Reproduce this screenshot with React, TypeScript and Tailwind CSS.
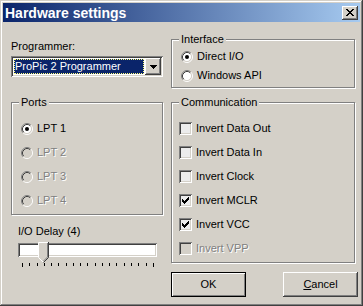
import React from "react";

const raised =
  "shadow-[inset_-1px_-1px_#404040,inset_1px_1px_#ffffff,inset_-2px_-2px_#808080,inset_2px_2px_#d4d0c8]";
const sunken =
  "shadow-[inset_1px_1px_#808080,inset_-1px_-1px_#ffffff,inset_2px_2px_#404040,inset_-2px_-2px_#d4d0c8]";
const disabledText = "text-[#808080] [text-shadow:1px_1px_0_#ffffff]";

function Radio({ checked, disabled, label }: { checked?: boolean; disabled?: boolean; label: string }) {
  return (
    <div className="flex items-center gap-[4px] h-[13px]">
      <svg width="12" height="12" viewBox="0 0 12 12" className="shrink-0">
        <circle cx="6" cy="6" r="4.5" fill={disabled ? "#d4d0c8" : "#ffffff"} />
        <path d="M2.11 9.89A5.5 5.5 0 0 1 9.89 2.11" stroke="#808080" fill="none" />
        <path d="M9.89 2.11A5.5 5.5 0 0 1 2.11 9.89" stroke="#ffffff" fill="none" />
        <path d="M2.82 9.18A4.5 4.5 0 0 1 9.18 2.82" stroke="#404040" fill="none" />
        <path d="M9.18 2.82A4.5 4.5 0 0 1 2.82 9.18" stroke="#d4d0c8" fill="none" />
        {checked && <circle cx="6" cy="6" r="2" fill="#000000" />}
      </svg>
      <span className={disabled ? disabledText : ""}>{label}</span>
    </div>
  );
}

function Check({ checked, disabled, label }: { checked?: boolean; disabled?: boolean; label: string }) {
  return (
    <div className="flex items-center gap-[4px] h-[13px]">
      <div
        className={`w-[13px] h-[13px] shrink-0 flex items-center justify-center ${sunken} ${
          disabled ? "bg-[#d4d0c8]" : "bg-[#ececec]"
        }`}
      >
        {checked && (
          <svg width="7" height="7" viewBox="0 0 7 7" shapeRendering="crispEdges">
            <path
              d="M0 2h1v3H0z M1 3h1v3H1z M2 4h1v3H2z M3 3h1v3H3z M4 2h1v3H4z M5 1h1v3H5z M6 0h1v3H6z"
              fill="#000000"
            />
          </svg>
        )}
      </div>
      <span className={disabled ? disabledText : ""}>{label}</span>
    </div>
  );
}

function Group({
  label,
  className,
  children,
}: {
  label: string;
  className: string;
  children: React.ReactNode;
}) {
  return (
    <div
      className={`relative border border-[#808080] shadow-[inset_1px_1px_#ffffff,1px_1px_#ffffff] ${className}`}
    >
      <span className="absolute left-[7px] top-[-7px] bg-[#d4d0c8] px-[2px] leading-[13px]">{label}</span>
      {children}
    </div>
  );
}

export default function App() {
  return (
    <div
      className={`w-[363px] h-[306px] bg-[#d4d0c8] p-[3px] flex flex-col font-['Liberation_Sans',Arial,sans-serif] text-[11px] leading-[13px] text-black shadow-[inset_-1px_-1px_#404040,inset_1px_1px_#d4d0c8,inset_-2px_-2px_#808080,inset_2px_2px_#ffffff]`}
    >
      {/* Title bar */}
      <div className="h-[19px] shrink-0 flex items-center justify-between pl-[2px] pr-[2px] bg-[linear-gradient(to_right,#0a246a,#a6caf0)]">
        <span className="text-white font-bold text-[14px] leading-[16px]">Hardware settings</span>
        <div className={`w-[16px] h-[14px] bg-[#d4d0c8] flex items-center justify-center ${raised}`}>
          <svg width="8" height="7" viewBox="0 0 8 7" shapeRendering="crispEdges" className="mt-[-1px]">
            <path
              d="M0 0h2v1H0z M6 0h2v1H6z M1 1h2v1H1z M5 1h2v1H5z M2 2h4v1H2z M3 3h2v1H3z M2 4h4v1H2z M1 5h2v1H1z M5 5h2v1H5z M0 6h2v1H0z M6 6h2v1H6z"
              fill="#000000"
            />
          </svg>
        </div>
      </div>

      {/* Body */}
      <div className="flex pl-[8px] gap-[8px]">
        {/* Left column */}
        <div className="w-[152px] flex flex-col">
          <div className="mt-[18px] h-[13px]">Programmer:</div>
          <div className={`mt-[3px] h-[21px] w-[152px] p-[2px] bg-white flex ${sunken}`}>
            <div className="flex-1 p-[1px]">
              <div className="h-full bg-[#0a246a] border border-dotted border-[#ffff80] text-white flex items-center">
                ProPic 2 Programmer
              </div>
            </div>
            <div className={`w-[16px] h-[17px] bg-[#d4d0c8] flex items-center justify-center ${raised}`}>
              <svg width="7" height="4" viewBox="0 0 7 4" shapeRendering="crispEdges">
                <path d="M0 0h7v1H0z M1 1h5v1H1z M2 2h3v1H2z M3 3h1v1H3z" fill="#000000" />
              </svg>
            </div>
          </div>

          <Group label="Ports" className="mt-[25px] w-[152px] h-[113px] flex flex-col pt-[19px] pl-[9px] gap-[11px]">
            <Radio checked label="LPT 1" />
            <Radio disabled label="LPT 2" />
            <Radio disabled label="LPT 3" />
            <Radio disabled label="LPT 4" />
          </Group>

          <div className="mt-[10px] ml-[7px] h-[13px]">I/O Delay (4)</div>
          <div className={`relative mt-[5px] ml-[7px] w-[139px] h-[14px] bg-white ${sunken}`}>
            <svg width="11" height="21" viewBox="0 0 11 21" className="absolute left-[20px] top-[-1px]">
              <polygon points="0,0 11,0 11,15.5 5.5,21 0,15.5" fill="#d4d0c8" />
              <path d="M0.5 15.5V0.5H10" stroke="#ffffff" fill="none" />
              <path d="M0.5 15.5L5 20" stroke="#ffffff" fill="none" />
              <path d="M10.5 0V15.5L5.5 20.5" stroke="#404040" fill="none" />
              <path d="M9.5 1V15L5.5 19" stroke="#808080" fill="none" />
            </svg>
          </div>
          <div className="mt-[6px] ml-[11px] w-[132px] flex justify-between items-start">
            {Array.from({ length: 19 }).map((_, i) => (
              <div key={i} className={`w-px bg-black ${i === 0 || i === 18 ? "h-[4px]" : "h-[3px]"}`} />
            ))}
          </div>
        </div>

        {/* Right column */}
        <div className="w-[187px] flex flex-col">
          <Group label="Interface" className="mt-[17px] w-[184px] h-[49px] flex flex-col pt-[10px] pl-[9px] gap-[6px]">
            <Radio checked label="Direct I/O" />
            <Radio label="Windows API" />
          </Group>

          <Group
            label="Communication"
            className="mt-[14px] w-[184px] h-[161px] flex flex-col pt-[19px] pl-[7px] gap-[11px]"
          >
            <Check label="Invert Data Out" />
            <Check label="Invert Data In" />
            <Check label="Invert Clock" />
            <Check checked label="Invert MCLR" />
            <Check checked label="Invert VCC" />
            <Check disabled label="Invert VPP" />
          </Group>

          <div className="mt-[9px] flex gap-[37px]">
            <div className="w-[75px] h-[25px] border border-black shadow-[inset_1px_1px_#ffffff,inset_-1px_-1px_#808080] flex items-center justify-center">
              OK
            </div>
            <div className={`w-[75px] h-[25px] flex items-center justify-center ${raised}`}>
              <span>
                <span className="underline">C</span>ancel
              </span>
            </div>
          </div>
        </div>
      </div>
    </div>
  );
}
